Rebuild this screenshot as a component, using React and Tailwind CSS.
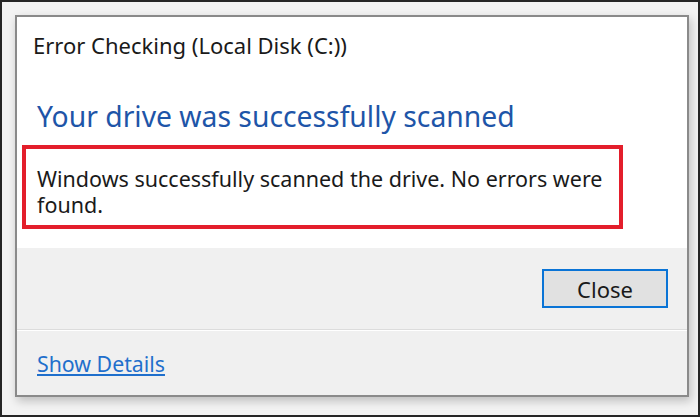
import React from 'react';

function App() {
  return (
    <div className="w-[700px] h-[417px] border-2 border-[#262626] bg-[#f3f3f3] pl-[13px] pt-[13px] font-['Noto_Sans','Open_Sans',sans-serif]">
      <div className="w-[674px] h-[382px] border-2 border-[#8a8a8a] bg-[#f0f0f0] flex flex-col shadow-[2px_4px_9px_rgba(0,0,0,0.22)]">
        {/* Content */}
        <div className="bg-white h-[231px] pl-[5px] pt-[14px]">
          <div className="ml-[11px] text-[22px] leading-[29px] text-[#1a1a1a]">Error Checking (Local Disk (C:))</div>
          <div className="mt-[38px] ml-[15px] text-[28.3px] leading-[36px] text-[#1e55a8]">Your drive was successfully scanned</div>
          <div className="mt-[11px] w-[601px] h-[84px] border-4 border-[#e31e2b] pl-[11px] pt-[17px] pr-[6px]">
            <p className="text-[21.5px] leading-[26px] text-[#1a1a1a]">
              Windows successfully scanned the drive. No errors were found.
            </p>
          </div>
        </div>

        {/* Buttons */}
        <div className="h-[82px] flex items-start justify-end pt-[21px] pr-[19px] border-b border-[#dcdcdc]">
          <button className="w-[126px] h-[39px] border-2 border-[#0a74d6] bg-[#e1e1e1] text-[22px] leading-none text-[#1a1a1a]">
            Close
          </button>
        </div>

        {/* Footer */}
        <div className="flex-1 border-t border-white pl-[20px] pt-[20px]">
          <a href="#" className="text-[21.3px] leading-[26px] text-[#1f6fcc] underline underline-offset-2">
            Show Details
          </a>
        </div>
      </div>
    </div>
  );
}

export default App;
